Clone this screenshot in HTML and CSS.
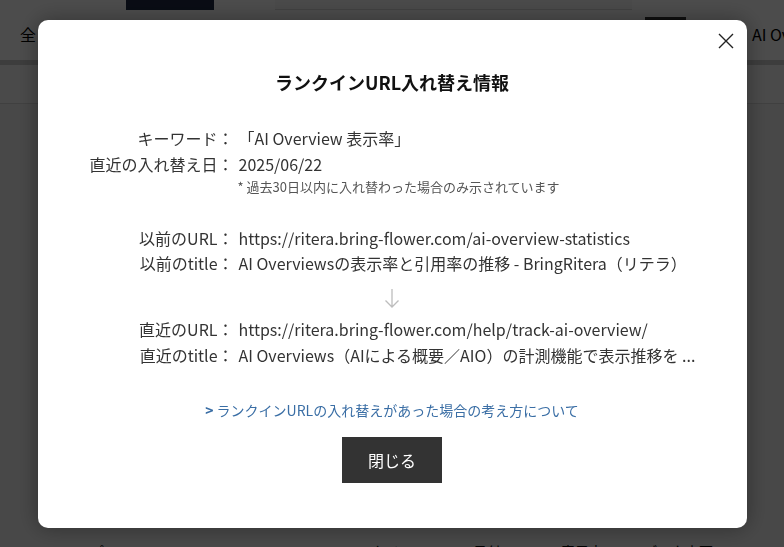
FILE: index.html
```html
<!DOCTYPE html>
<html lang="ja">
<head>
<meta charset="utf-8">
<title>ランクインURL入れ替え情報</title>
<link rel="stylesheet" href="styles.css">
</head>
<body>
<div class="page">
  <div class="topbar">
    <div class="logo-block"></div>
    <div class="search-box"></div>
  </div>
  <div class="tabs">
    <span class="tab-all">全</span>
    <span class="tab-dark"></span>
    <span class="tab-kw">AI Overview</span>
  </div>
  <div class="band"></div>
  <div class="subrow"></div>
  <div class="main">
    <div class="bottom-row">
      <span class="b1">パス</span>
      <span class="b2">ランクイン</span>
      <span class="b3">日付</span>
      <span class="b4">表示率</span>
      <span class="b5">データ変更</span>
    </div>
  </div>
</div>

<div class="overlay">
  <div class="modal">
    <button class="close" aria-label="閉じる">
      <svg width="16" height="16" viewBox="0 0 16 16"><path d="M1 1 L15 15 M15 1 L1 15" stroke="#222" stroke-width="1.4" fill="none"/></svg>
    </button>
    <h2 class="title">ランクインURL入れ替え情報</h2>

    <div class="info info-top">
      <div class="label">キーワード：</div>
      <div class="value">「AI Overview 表示率」</div>
      <div class="label">直近の入れ替え日：</div>
      <div class="value">2025/06/22</div>
      <div class="label"></div>
      <div class="note">* 過去30日以内に入れ替わった場合のみ示されています</div>
    </div>

    <div class="info info-prev">
      <div class="label">以前のURL：</div>
      <div class="value">https://ritera.bring-flower.com/ai-overview-statistics</div>
      <div class="label">以前のtitle：</div>
      <div class="value">AI Overviewsの表示率と引用率の推移 - BringRitera（リテラ）</div>
    </div>

    <div class="arrow">
      <svg width="16" height="20" viewBox="0 0 16 20"><path d="M8 1 V19 M1.5 12.5 L8 19 L14.5 12.5" stroke="#bdbdbd" stroke-width="1.3" fill="none"/></svg>
    </div>

    <div class="info info-next">
      <div class="label">直近のURL：</div>
      <div class="value">https://ritera.bring-flower.com/help/track-ai-overview/</div>
      <div class="label">直近のtitle：</div>
      <div class="value">AI Overviews（AIによる概要／AIO）の計測機能で表示推移を ...</div>
    </div>

    <a class="link" href="#"><span class="chev">&gt;</span> ランクインURLの入れ替えがあった場合の考え方について</a>

    <div class="actions">
      <button class="btn-close">閉じる</button>
    </div>
  </div>
</div>
</body>
</html>
```

FILE: styles.css
```css
html, body {
  margin: 0;
  padding: 0;
}
body {
  font-family: "Noto Sans CJK JP", "Noto Sans", sans-serif;
  color: #333;
  width: 784px;
  height: 547px;
  overflow: hidden;
}

/* ---------- background page ---------- */
.page {
  height: 547px;
  background: #f0f0f0;
  display: flex;
  flex-direction: column;
}
.topbar {
  height: 10px;
  flex-shrink: 0;
  background: #ffffff;
  display: flex;
}
.logo-block {
  flex-shrink: 0;
  margin-left: 126px;
  width: 88px;
  height: 10px;
  background: #1f2b45;
}
.search-box {
  flex-shrink: 0;
  margin-left: 61px;
  width: 357px;
  height: 9px;
  border-bottom: 1px solid #dcdcdc;
  background: #f7f7f7;
}
.tabs {
  height: 50px;
  flex-shrink: 0;
  background: #ffffff;
  display: flex;
  align-items: flex-start;
  overflow: hidden;
}
.tabs > span { flex-shrink: 0; }
.tab-all {
  margin-left: 20px;
  margin-top: 13px;
  width: 16px;
  font-size: 16px;
  line-height: 22px;
  color: #000;
}
.tab-dark {
  margin-left: 609px;
  margin-top: 7px;
  width: 41px;
  height: 20px;
  background: #333;
}
.tab-kw {
  margin-left: 66px;
  margin-top: 13px;
  font-size: 16px;
  line-height: 22px;
  color: #000;
  white-space: nowrap;
}
.band {
  height: 5px;
  flex-shrink: 0;
  background: #cbcbcb;
}
.subrow {
  height: 38px;
  flex-shrink: 0;
  background: #f7f7f7;
  border-bottom: 1px solid #d8d8d8;
}
.main {
  flex: 1;
  background: #f0f0f0;
  display: flex;
  flex-direction: column;
  justify-content: flex-end;
}
.bottom-row {
  display: flex;
  height: 6px;
  overflow: hidden;
  font-size: 14px;
  line-height: 20px;
  color: #000;
}
.bottom-row span { white-space: nowrap; flex-shrink: 0; }
.b1 { margin-left: 90px; }
.b2 { margin-left: 225px; }
.b3 { margin-left: 60px; }
.b4 { margin-left: 60px; }
.b5 { margin-left: 40px; }

/* ---------- overlay & modal ---------- */
.overlay {
  position: fixed;
  inset: 0;
  background: rgba(0, 0, 0, 0.7);
  display: flex;
  align-items: center;
  justify-content: center;
}
.modal {
  position: relative;
  width: 709px;
  height: 508px;
  box-sizing: border-box;
  background: #fff;
  border-radius: 10px;
  box-shadow: 0 0 22px rgba(0, 0, 0, 0.35);
  padding-top: 49px;
  display: flex;
  flex-direction: column;
}
.close {
  position: absolute;
  top: 13px;
  right: 13px;
  width: 16px;
  height: 16px;
  padding: 0;
  border: 0;
  background: none;
  display: flex;
}
.title {
  margin: 0;
  text-align: center;
  font-size: 18px;
  line-height: 26px;
  font-weight: 700;
  color: #111;
}
.info {
  display: grid;
  grid-template-columns: 196px 1fr;
  column-gap: 5px;
  font-size: 16px;
  line-height: 25px;
  white-space: nowrap;
}
.info-top { margin-top: 30px; line-height: 26px; }
.info-prev { margin-top: 30px; }
.info-next { margin-top: 8px; line-height: 26px; }
.label {
  text-align: right;
  color: #333;
}
.value {
  color: #333;
}
.note {
  margin-top: 1px;
  font-size: 13px;
  line-height: 18px;
  color: #555;
  margin-left: -1px;
}
.arrow {
  margin-top: 12px;
  height: 20px;
  display: flex;
  justify-content: center;
}
.link {
  margin-top: 32px;
  align-self: center;
  font-size: 14px;
  line-height: 20px;
  color: #3a6ea5;
  text-decoration: none;
  white-space: nowrap;
}
.chev {
  font-weight: 700;
}
.actions {
  margin-top: 17px;
  display: flex;
  justify-content: center;
}
.btn-close {
  width: 100px;
  height: 46px;
  border: 0;
  background: #333;
  color: #fff;
  font-family: "Noto Sans CJK JP", sans-serif;
  font-size: 16px;
}
```
